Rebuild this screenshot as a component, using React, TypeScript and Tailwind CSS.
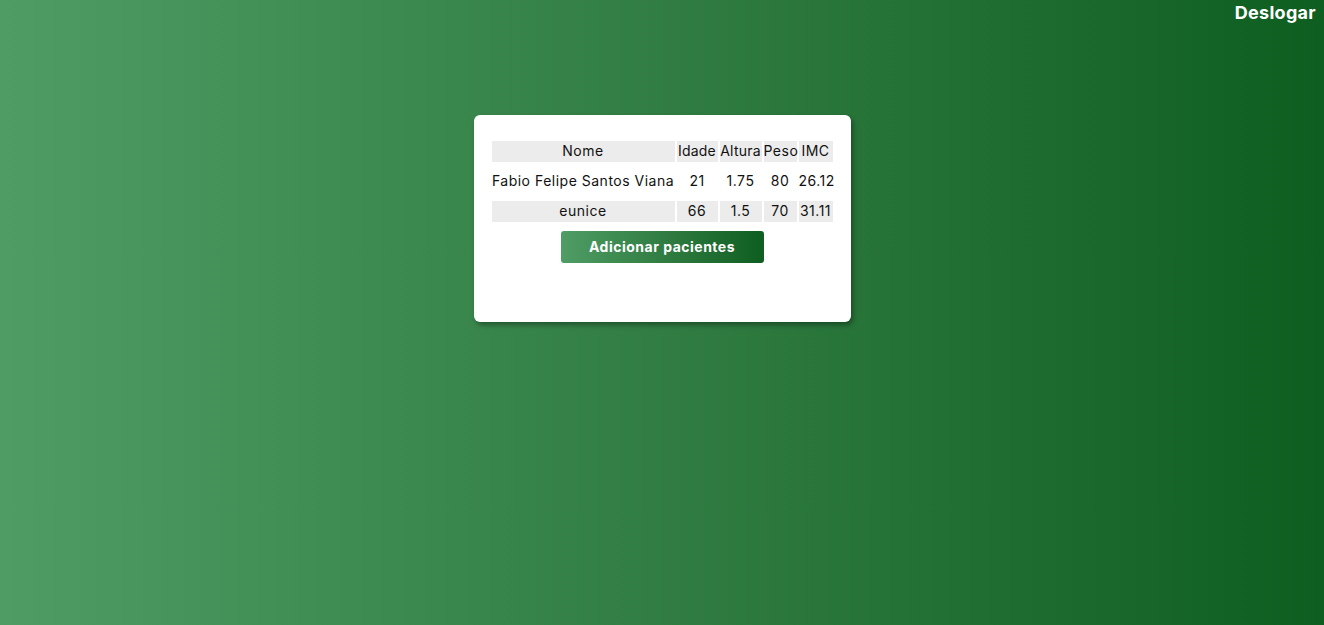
const pacientes = [
  { nome: 'Fabio Felipe Santos Viana', idade: 21, altura: '1.75', peso: 80, imc: '26.12' },
  { nome: 'eunice', idade: 66, altura: '1.5', peso: 70, imc: '31.11' },
]

const App: React.FC = () => {
  return (
    <div
      className="relative w-full h-[625px] bg-gradient-to-r from-[#4f9d65] to-[#0d5e20] text-[#111]"
      style={{ fontFamily: 'Inter, "Noto Sans", sans-serif' }}
    >
      <div className="flex justify-end pr-[8px] pt-[0px]">
        <button className="text-white font-bold text-[18px] leading-[26px] tracking-[0.3px]">Deslogar</button>
      </div>

      <div className="flex justify-center pt-[89px]">
        <div className="w-[377px] h-[207px] bg-white rounded-[6px] shadow-[2px_3px_5px_rgba(0,0,0,0.35)] px-[16px] pt-[17px] flex flex-col items-center">
          <table className="table-fixed border-separate border-spacing-x-[2px] border-spacing-y-[9px] text-[14px] leading-[19px] tracking-[0.5px] w-[345px]">
            <colgroup>
              <col className="w-[183px]" />
              <col className="w-[41px]" />
              <col className="w-[42px]" />
              <col className="w-[33px]" />
              <col className="w-[34px]" />
            </colgroup>
            <thead>
              <tr className="bg-[#ececec]">
                <th className="font-normal text-center p-0 pb-[2px] h-[21px]">Nome</th>
                <th className="font-normal text-center p-0 pb-[2px] whitespace-nowrap tracking-[0.2px]">Idade</th>
                <th className="font-normal text-center p-0 pb-[2px] whitespace-nowrap tracking-[0.2px]">Altura</th>
                <th className="font-normal text-center p-0 pb-[2px]">Peso</th>
                <th className="font-normal text-center p-0 pb-[2px]">IMC</th>
              </tr>
            </thead>
            <tbody>
              {pacientes.map((p, i) => (
                <tr key={p.nome} className={i % 2 === 1 ? 'bg-[#ececec]' : ''}>
                  <td className="text-center p-0 pb-[2px] h-[21px] whitespace-nowrap">{p.nome}</td>
                  <td className="text-center p-0 pb-[2px]">{p.idade}</td>
                  <td className="text-center p-0 pb-[2px]">{p.altura}</td>
                  <td className="text-center p-0 pb-[2px]">{p.peso}</td>
                  <td className="text-center p-0 pb-[2px] whitespace-nowrap">{p.imc}</td>
                </tr>
              ))}
            </tbody>
          </table>
          <button className="w-[203px] h-[32px] rounded-[3px] bg-gradient-to-r from-[#4f9d65] to-[#0d5e20] text-white font-bold text-[14px] tracking-[0.5px] pb-[2px]">
            Adicionar pacientes
          </button>
        </div>
      </div>
    </div>
  )
}

export default App
